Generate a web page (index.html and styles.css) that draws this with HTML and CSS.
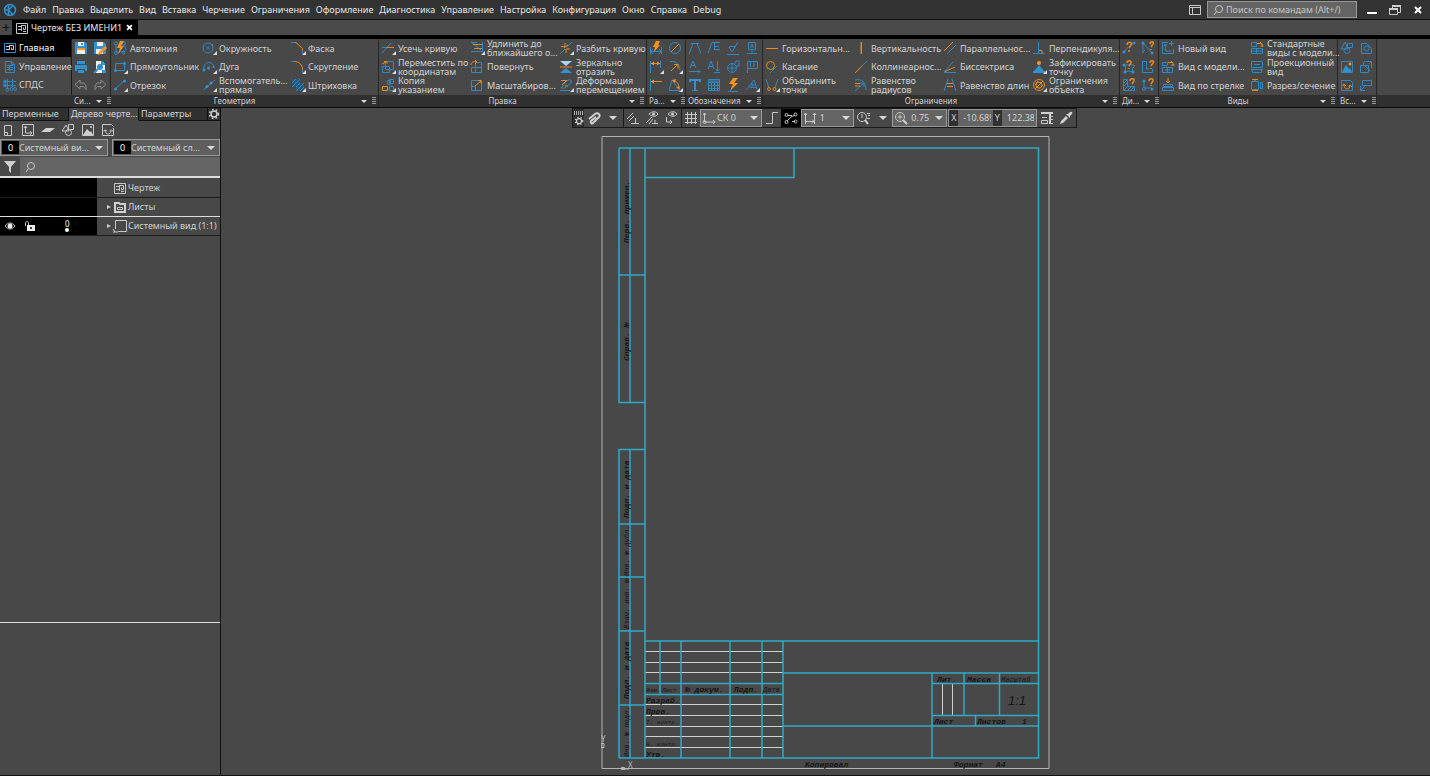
FILE: index.html
```
<!DOCTYPE html>
<html lang="ru">

<head>
    <meta charset="utf-8">
    <link rel="stylesheet" href="styles.css">
    <title>Чертеж БЕЗ ИМЕНИ1</title>
</head>

<body>
    <!-- icon set, every symbol is drawn on a 16x16 grid -->
    <svg class="sprite">
        <symbol id="logo" viewBox="0 0 16 16"><circle class="b2" cx="8" cy="8" r="5.500"/><path class="b2" d="M6.500 3v10M6.500 8l4-4M6.500 8l4 4M2 8h4"/></symbol>
        <symbol id="sheet" viewBox="0 0 16 16"><path class="s" d="M2.500 3.500h11v10h-11zM4 6.500h3.500v3H4M7.500 5v6M7.500 5.500h4v4h-2v-2M9 11.500h3"/></symbol>
        <symbol id="sheetb" viewBox="0 0 16 16"><path class="b" d="M2.500 3.500h11v9h-11z"/><path class="w" d="M4 6.500h3.500v3H4M7.500 5v5M7.500 5.500h4v4h-2v-2"/></symbol>
        <symbol id="manage" viewBox="0 0 16 16"><path class="b" d="M3.500 2.500h6l3 3v8h-9zM9.500 2.500v3h3M5 6.500h6M5 8.500h6M5 10.500h6M7.500 6v6"/></symbol>
        <symbol id="spds" viewBox="0 0 16 16"><path class="b" d="M5.500 2v10M10.500 2v8M2 4.500h12M2 8.500h12"/><circle class="b" cx="3" cy="4.500" r="1.500"/><circle class="b" cx="3" cy="8.500" r="1.500"/><circle class="b" cx="5.500" cy="12.500" r="1.500"/><circle class="b" cx="9.500" cy="12" r="1.500"/><circle class="b" cx="13" cy="12" r="1.500"/></symbol>
        <symbol id="save" viewBox="0 0 16 16"><path class="bf" d="M2 2h10l2 2v10H2z"/><path class="wf" d="M5 2h6v4H5zM4 8h8v6H4z"/><path class="of" d="M4 8h8v2H4z"/><path class="bf" d="M8 3h2v2H8z"/></symbol>
        <symbol id="saveas" viewBox="0 0 16 16"><path class="bf" d="M2 2h10l2 2v10H2z"/><path class="wf" d="M5 2h6v4H5zM4 9h7v5H4z"/><path class="of" d="M13 6l2 2-6 6-3 1 1-3z"/></symbol>
        <symbol id="print" viewBox="0 0 16 16"><path class="bf" d="M4 2h8v3H4zM2 6h12v6h-2v-2H4v2H2zM5 11h6v3H5z"/></symbol>
        <symbol id="preview" viewBox="0 0 16 16"><path class="wf" d="M4 2h6l3 3v9H4z"/><circle class="bf" cx="8" cy="8" r="3"/><path class="b2" d="M6 10l-4 4M10 2v3h3"/><path class="bf" d="M10 11h4v3h-4z"/></symbol>
        <symbol id="undo" viewBox="0 0 16 16"><path class="g" d="M7 3L2 7.500 7 12V9.500h3.500l2.500 3V9l-2-3H7z"/></symbol>
        <symbol id="redo" viewBox="0 0 16 16"><path class="g" d="M9 3l5 4.500L9 12V9.500H5.500L3 12.500V9l2-3h4z"/></symbol>
        <symbol id="autoline" viewBox="0 0 16 16"><path class="b" d="M4 12V4M12 12c3-2 2-6-1-7M4 12c3 2 5-2 8 0"/><circle class="b" cx="4" cy="3.500" r="1.500"/><circle class="b" cx="12" cy="3.500" r="1.500"/><circle class="b" cx="4" cy="13" r="1.500"/><circle class="b" cx="11.500" cy="12.500" r="1.500"/><path class="of" d="M8 1h4L9 6h3l-6 8 2-6H5z"/></symbol>
        <symbol id="rect" viewBox="0 0 16 16"><path class="b" d="M3.500 4.500h9v7h-9z"/><circle class="bf" cx="3.500" cy="11.500" r="1.500"/><circle class="bf" cx="12.500" cy="4.500" r="1.500"/></symbol>
        <symbol id="segment" viewBox="0 0 16 16"><path class="b" d="M3 12l9-8"/><circle class="bf" cx="3.500" cy="12" r="1.500"/><circle class="bf" cx="12.500" cy="4" r="1.500"/></symbol>
        <symbol id="circle" viewBox="0 0 16 16"><circle class="b" cx="7" cy="8" r="5"/><circle class="b" cx="7" cy="8" r="1"/><circle class="bf" cx="11" cy="5" r="1"/></symbol>
        <symbol id="arc" viewBox="0 0 16 16"><path class="b" d="M3 11c-2-9 10-10 10-2"/><circle class="bf" cx="3" cy="11" r="1.500"/><circle class="bf" cx="7.500" cy="9" r="1.500"/><circle class="bf" cx="12.500" cy="8" r="1"/></symbol>
        <symbol id="aux" viewBox="0 0 16 16"><path class="b" d="M2 13L14 3"/><circle class="bf" cx="6" cy="9.500" r="1.500"/><circle class="bf" cx="10" cy="6" r="1.500"/></symbol>
        <symbol id="chamfer" viewBox="0 0 16 16"><path class="b" d="M1 2.500h5M12.500 9v5"/><path class="o" d="M5 2.500h1l6.500 6v2"/></symbol>
        <symbol id="fillet" viewBox="0 0 16 16"><path class="b" d="M1 2.500h4M12.500 10v4"/><path class="o" d="M4 2.500c5 0 8.500 3 8.500 8"/></symbol>
        <symbol id="hatch" viewBox="0 0 16 16"><path class="bf d" d="M2 2h8v4h4v8H6v-4H2z"/><path class="b" d="M2 6l4-4M2 10l8-8M6 10l4-4M6 14l8-8M10 14l4-4"/></symbol>
        <symbol id="trim" viewBox="0 0 16 16"><path class="b" d="M2 13L11 3M2 7.500h6"/><path class="o" d="M7 7.500h7"/></symbol>
        <symbol id="move" viewBox="0 0 16 16"><path class="b" d="M5.500 2.500h8v8h-8zM2.500 7.500h7v6h-7z"/><path class="o" d="M2 5l4-2M4 2.500h3v2"/></symbol>
        <symbol id="copy" viewBox="0 0 16 16"><path class="b" d="M7.500 3.500h3v4h-3zM9.500 2.500h4v4h-4zM9.500 9.500h4v4h-4z"/><path class="o" d="M2.500 9.500h5v4h-5z"/></symbol>
        <symbol id="extend" viewBox="0 0 16 16"><path class="b" d="M2 2.500h6M2 11.500h11M13.500 2v10M2 2l10 8"/><path class="o" d="M4 4.500h9M5 8.500h8"/></symbol>
        <symbol id="rotate" viewBox="0 0 16 16"><path class="b" d="M6.500 3.500h6v10h-6zM2.500 8.500h10v5h-10z"/><path class="o" d="M2 6c0-3 3-4 6-3M6 1l2 2-2 2"/></symbol>
        <symbol id="scale" viewBox="0 0 16 16"><path class="b" d="M2.500 3.500h10v10h-10zM2.500 9.500h4v4"/><path class="o" d="M6 9l6-5M9 3.500h3v3"/></symbol>
        <symbol id="break" viewBox="0 0 16 16"><path class="b" d="M2 14L7 9M9 7l5-5"/><path class="o" d="M3 6.500h4V3M6 8l4-3M8 13V9h4"/></symbol>
        <symbol id="mirror" viewBox="0 0 16 16"><path class="lf" d="M2 2h12L8 7z"/><path class="bf" d="M8 9l6 5H2z"/><path class="o" d="M2 8h12"/></symbol>
        <symbol id="deform" viewBox="0 0 16 16"><path class="b" d="M2 13.500h10M3 11l7-8h3v3l-6 5z"/><path class="o" d="M3 3.500h6M4 8l5-5M7 9h3"/></symbol>
        <symbol id="adim" viewBox="0 0 16 16"><path class="b" d="M2.500 7v7M13.500 7v7M3 11.500h10M5 9l-2 2.500L5 14M11 9l2 2.500-2 2.500"/><path class="of" d="M8 1h4l-2 4h2l-6 7 1-5H5z"/></symbol>
        <symbol id="diam" viewBox="0 0 16 16"><circle class="b" cx="8" cy="8" r="5.500"/><path class="o" d="M4 12l8-8"/></symbol>
        <symbol id="ldim" viewBox="0 0 16 16"><path class="b" d="M2.500 2v12M12.500 2v7"/><path class="o" d="M3 4.500h9"/><path class="of" d="M3 4.500l3-2v4zM12 4.500l-3-2v4z"/></symbol>
        <symbol id="rad" viewBox="0 0 16 16"><path class="b" d="M3 2.500c7-1 10 4 10 9"/><path class="o" d="M4 12l6-6M7 5.500h4v4"/></symbol>
        <symbol id="base" viewBox="0 0 16 16"><path class="b" d="M2.500 2v12"/><path class="o" d="M3 4.500h11"/><path class="of" d="M3 4.500l3-2v4z"/></symbol>
        <symbol id="angle" viewBox="0 0 16 16"><path class="b" d="M2 13.500h11L5 3 2 13"/><path class="o" d="M6 4c4 0 6 3 6 7"/><path class="of" d="M5 3l4-1-1 4zM13 12l-4-1 3-2z"/></symbol>
        <symbol id="leadA" viewBox="0 0 16 16"><path class="b" d="M2 14L6 3.500h4l4 10M4 3.500h8"/></symbol>
        <symbol id="leadE" viewBox="0 0 16 16"><path class="b" d="M2 13L6 2.500h8M8.500 3v7M8 6.500h5M8 9.500h6"/></symbol>
        <symbol id="rough" viewBox="0 0 16 16"><path class="b" d="M2 14.500h12M4 7l3 5 6-10M4 6.500h6"/></symbol>
        <symbol id="datum" viewBox="0 0 16 16"><path class="b" d="M4.500 2.500h7v7h-7zM8 10v4M3 13.500h10M8 4L6.500 8M8 4l1.500 4"/></symbol>
        <symbol id="cutA" viewBox="0 0 16 16"><path class="b" d="M3 9L6 2l3 7M4 6.500h4M2 12.500h11M11 10.500l2 2-2 2"/></symbol>
        <symbol id="arrA" viewBox="0 0 16 16"><path class="b" d="M2 10L5 2l3 8M3 7.500h4M11.500 2v10M9.500 10l2 2 2-2M8 13.500h6"/></symbol>
        <symbol id="balloon" viewBox="0 0 16 16"><circle class="b" cx="7" cy="9" r="4.500"/><path class="b" d="M3 9h8M7 5v9M9 6l2-4h3v5h-3"/></symbol>
        <symbol id="flag" viewBox="0 0 16 16"><path class="b" d="M3.500 14V2.500h10v7h-10M6.500 3v5M10 3v5"/></symbol>
        <symbol id="textT" viewBox="0 0 16 16"><path class="b2" d="M3 5V3h10v2M8 3v10"/><path class="b" d="M5 13.500h6"/></symbol>
        <symbol id="table" viewBox="0 0 16 16"><path class="b" d="M2.500 2.500h11v11h-11zM2 5.500h12M2 8.500h12M2 11.500h12M5.500 5v9M8.500 5v9M11.500 5v9M3 4h10"/></symbol>
        <symbol id="bolt" viewBox="0 0 16 16"><path class="of" d="M8 1h5L9 6h4l-8 8 3-7H4z"/><path class="b" d="M3 14.500h10"/></symbol>
        <symbol id="mark" viewBox="0 0 16 16"><path class="b" d="M2 13L10 3l3 9M5 10l8 1M8 6v5M8 8h3"/></symbol>
        <symbol id="hor" viewBox="0 0 16 16"><path class="o" d="M2 8.500h12"/></symbol>
        <symbol id="ver" viewBox="0 0 16 16"><path class="o" d="M8.500 2v12M8 2v12"/></symbol>
        <symbol id="par" viewBox="0 0 16 16"><path class="o" d="M2 11l9-9"/><path class="b" d="M5 14l9-9"/></symbol>
        <symbol id="perp" viewBox="0 0 16 16"><path class="b" d="M2 13.500h12M7.500 2v11"/><path class="o" d="M8 10.500h3V13"/></symbol>
        <symbol id="tan" viewBox="0 0 16 16"><circle class="o" cx="6.500" cy="6.500" r="4"/><path class="b" d="M6 14l7-7"/></symbol>
        <symbol id="col" viewBox="0 0 16 16"><path class="o" d="M2 14l7-7"/><path class="b" d="M9 7l5-5"/></symbol>
        <symbol id="bis" viewBox="0 0 16 16"><path class="b" d="M2 13L11 3M2 13.500h12"/><path class="o" d="M3 12.500L13 8"/></symbol>
        <symbol id="fix" viewBox="0 0 16 16"><path class="bf" d="M8 6l5 6h1v2H2v-2h1z"/><circle class="of" cx="8" cy="4" r="2"/></symbol>
        <symbol id="join" viewBox="0 0 16 16"><path class="b" d="M2 2l3 9M14 2l-3 9"/><circle class="o" cx="5" cy="12" r="1.500"/><circle class="o" cx="10.500" cy="12" r="1.500"/></symbol>
        <symbol id="eqr" viewBox="0 0 16 16"><path class="b" d="M2 3c7-2 11 3 11 10M2 14l9-8M7 6h4v4"/><path class="o" d="M2 6.500h5M2 9h5"/></symbol>
        <symbol id="eql" viewBox="0 0 16 16"><path class="b" d="M2 14L6 2M10 2l4 12"/><path class="o" d="M5 6.500h6M5 9.500h6"/></symbol>
        <symbol id="limit" viewBox="0 0 16 16"><circle class="o" cx="8" cy="8" r="5.500"/><circle class="o" cx="8" cy="8" r="3"/><path class="o" d="M4 12l8-8M7 4L4 8M12 8l-4 4"/></symbol>
        <symbol id="q1" viewBox="0 0 16 16"><path class="b" d="M3 12l4-5M9 5l3-2"/><circle class="bf" cx="3" cy="12" r="1.500"/><circle class="bf" cx="13" cy="3" r="1.500"/><path class="o2" d="M6 5c0-4 6-3 4 0L8 8M8 10v2"/></symbol>
        <symbol id="q2" viewBox="0 0 16 16"><path class="b" d="M3 3v10M4 4l7 8M2 13l3-3"/><circle class="bf" cx="3" cy="3" r="1.500"/><circle class="bf" cx="12" cy="13" r="1.500"/><path class="o2" d="M10 4c0-3 5-3 3 0l-2 3M11 9v1"/></symbol>
        <symbol id="q3" viewBox="0 0 16 16"><path class="b" d="M3 6h10v2l-2 2 1 3-4-1-4 1 1-4z"/><circle class="bf" cx="3" cy="6" r="1.500"/><circle class="bf" cx="4" cy="13" r="1.500"/><circle class="bf" cx="12" cy="13" r="1.500"/><path class="o2" d="M6 4c0-3 5-3 4 0L8 7M8 9v1"/></symbol>
        <symbol id="q4" viewBox="0 0 16 16"><path class="b" d="M7 2.500H2.500v11h10V10M6.500 3v7h3"/><path class="o2" d="M10 4c0-3 5-3 3 0l-2 3M11 9v1"/></symbol>
        <symbol id="q5" viewBox="0 0 16 16"><path class="b" d="M2.500 2.500h4v7h7v4h-11zM3 6l3-3M3 9l3-3M3 13l4-4M7 13l3-3M10 13l3-3"/><path class="o2" d="M9 4c0-3 5-3 4 0l-2 3"/></symbol>
        <symbol id="q6" viewBox="0 0 16 16"><path class="b" d="M4 3v8h8"/><circle class="bf" cx="4" cy="4" r="1.500"/><circle class="b" cx="4" cy="12" r="1.500"/><circle class="bf" cx="12" cy="12" r="1.500"/><path class="o2" d="M9 4c0-3 5-3 4 0l-2 3M11 8v1"/></symbol>
        <symbol id="newview" viewBox="0 0 16 16"><path class="b" d="M8 2.500H2.500v11h11V9M5.500 5v6h6M4 6l1.500-2L7 6M11.500 1v5M9 3.500h5"/></symbol>
        <symbol id="modelview" viewBox="0 0 16 16"><path class="b" d="M2.500 3.500h5v3h-5zM2.500 8.500h10v5h-10zM5 11h5M7.500 9v4"/><path class="o" d="M8 3.500h5V7M11 2l2 2M11.500 6h3"/></symbol>
        <symbol id="arrowview" viewBox="0 0 16 16"><path class="b" d="M3.500 7.500h9v2h-9zM2.500 10.500h11v3h-11z"/><path class="o" d="M8 1v5M6 4l2 2 2-2"/></symbol>
        <symbol id="stdview" viewBox="0 0 16 16"><path class="b" d="M2.500 2.500h5v4h-5zM2.500 8.500h11v5h-11zM2.500 11h11M7.500 8v6"/><path class="o" d="M8 3.500h5V7M11 2l2 2M11.500 6h3"/></symbol>
        <symbol id="projview" viewBox="0 0 16 16"><path class="b" d="M2.500 2.500h11v6h-11zM5 5.500h6M2 10.500h12M3.500 10.500v3h9v-3"/></symbol>
        <symbol id="section" viewBox="0 0 16 16"><path class="b" d="M2.500 4.500h7v8h-7zM11.500 5.500h2v6h-2z"/><path class="o" d="M6 2v2M6 12v2M3 2.500h6M3 13.500h6"/></symbol>
        <symbol id="frag" viewBox="0 0 16 16"><path class="b" d="M2 9l4-7 3 7zM8.500 3.500h5v4h-5z"/><circle class="b" cx="8" cy="10.500" r="3"/></symbol>
        <symbol id="detail" viewBox="0 0 16 16"><path class="b" d="M3.500 13.500V3.500h5l5 5v5z"/><circle class="b" cx="8.500" cy="8.500" r="2.500"/></symbol>
        <symbol id="picture" viewBox="0 0 16 16"><path class="b" d="M2.500 2.500h11v11h-11z"/><path class="bf" d="M3 13l4-7 3 4 1-1 2 4z"/><circle class="of" cx="11" cy="5" r="1.500"/></symbol>
        <symbol id="crop" viewBox="0 0 16 16"><path class="b" d="M2.500 6.500h8v7h-8zM5.500 6V4l2-2M8 2.500h5.500V9M11 5l2-2M6 6l6 6"/></symbol>
        <symbol id="refresh" viewBox="0 0 16 16"><path class="b" d="M2.500 3.500h9l2 2v8h-11z"/><path class="o" d="M5 8c0 5 6 5 6 1M3.500 9l1.500-2 2 2M9.500 10l1.500-2 2 2"/></symbol>
        <symbol id="callout" viewBox="0 0 16 16"><path class="b" d="M4.500 3.500h9v5h-9zM2 14l5-5M2 13.500h5M2.500 14V9"/></symbol>
        <!-- grey icons of the side panel and of the canvas toolbar -->
        <symbol id="page" viewBox="0 0 16 16"><path class="s" d="M4.500 3.500h7v10h-7zM4.500 10.500h3v3"/></symbol>
        <symbol id="axes" viewBox="0 0 16 16"><path class="s" d="M2.500 2.500h11v11h-11zM5.500 4v7H12M4 6l1.500-2L7 6M10 9.500l2 1.500-2 1.500"/></symbol>
        <symbol id="layer" viewBox="0 0 16 16"><path class="sf" d="M6 6h9l-5 4H1z"/></symbol>
        <symbol id="shapes" viewBox="0 0 16 16"><path class="s" d="M2 9l4-6 3 6zM8.500 2.500h5v5h-5z"/><circle class="s" cx="8.500" cy="10.500" r="3"/></symbol>
        <symbol id="image" viewBox="0 0 16 16"><path class="s" d="M2.500 2.500h11v11h-11z"/><path class="sf" d="M3 13l4-6 3 3 1-1 2 4z"/><circle class="sf" cx="11" cy="5" r="1"/></symbol>
        <symbol id="sync" viewBox="0 0 16 16"><path class="s" d="M2.500 2.500h9l2 2M2.500 2.500v11h11V6M5 8c0 5 6 5 6 1M3.500 9l1.500-1 2 1M9.500 9l1.500-1 2 1"/></symbol>
        <symbol id="gear" viewBox="0 0 16 16"><circle class="s2" cx="8" cy="8" r="4"/><circle class="dots" cx="8" cy="8" r="6"/></symbol>
        <symbol id="funnel" viewBox="0 0 16 16"><path class="sf" d="M2 2h12L9 8v6l-2-2V8z"/></symbol>
        <symbol id="lens" viewBox="0 0 16 16"><circle class="s" cx="9" cy="7" r="3.500"/><path class="s" d="M6 10l-2 3"/></symbol>
        <symbol id="folder" viewBox="0 0 16 16"><path class="s2" d="M3 4h4l1 1h5v8H3z"/><path class="s" d="M5.500 8.500h5v2h-5z"/></symbol>
        <symbol id="viewbox" viewBox="0 0 16 16"><path class="s" d="M3.500 11V2.500h11v11H6M1 11l2 3M1 14h5"/></symbol>
        <symbol id="eye" viewBox="0 0 16 16"><path class="s" d="M3 8c3-4 7-4 10 0-3 4-7 4-10 0z"/><circle class="wf" cx="8" cy="8" r="2.500"/></symbol>
        <symbol id="lock" viewBox="0 0 16 16"><path class="s" d="M3.500 8V5c0-2 3-2 3 0v2"/><path class="wf" d="M5 7h8v6H5z"/><circle cx="9" cy="10" r="1"/></symbol>
        <symbol id="clip" viewBox="0 0 16 16"><path class="s2" d="M3 9l6-5c3-2 6 1 4 3l-6 6c-1 1-3 0-2-2l5-4"/></symbol>
        <symbol id="snap1" viewBox="0 0 16 16"><path class="s" d="M2 9l6-6M4 11l5-5M6 13.500h8M10.500 8v5"/></symbol>
        <symbol id="snap2" viewBox="0 0 16 16"><path class="s" d="M5 4c3-3 7-3 9 0-2 3-6 3-9 0zM2 13l6-6M5 14l4-5M8 13.500h6M11 10v3"/><circle class="sf" cx="9.500" cy="4" r="1.500"/></symbol>
        <symbol id="snap3" viewBox="0 0 16 16"><path class="s" d="M5 4c3-3 7-3 9 0-2 3-6 3-9 0zM3.500 7v5H9M7 10l2 2-2 2"/><circle class="sf" cx="9.500" cy="4" r="1.500"/></symbol>
        <symbol id="grid" viewBox="0 0 16 16"><path class="s" d="M2 4.500h12M2 8.500h12M2 12.500h12M4.500 2v12M8.500 2v12M12.500 2v12"/></symbol>
        <symbol id="cs" viewBox="0 0 16 16"><path class="s" d="M3.500 3v9H14M2 5l1.500-2L5 5M12 10l2 2-2 2"/><circle class="s" cx="3.500" cy="12" r="1.500"/></symbol>
        <symbol id="ortho" viewBox="0 0 16 16"><path class="s" d="M2 13.500h6.500v-11H14"/></symbol>
        <symbol id="round" viewBox="0 0 16 16"><path class="s" d="M4 11l4-4 4-2M5 5.500h4M9 11.500h3"/><circle class="s" cx="3.500" cy="5" r="1.500"/><circle class="s" cx="12.500" cy="4.500" r="1.500"/><circle class="s" cx="3.500" cy="12" r="1.500"/><circle class="s" cx="12.500" cy="11.500" r="1.500"/></symbol>
        <symbol id="step" viewBox="0 0 16 16"><path class="s" d="M3.500 3v11M12.500 3v11M4 11.500h8M2 5l1.500-2L5 5M11 5l1.500-2L14 5M10 9.500l2 2-2 2"/></symbol>
        <symbol id="zoomsel" viewBox="0 0 16 16"><circle class="s" cx="7" cy="7" r="4.500"/><path class="s2" d="M10 10l3 4"/><path class="s" d="M12 3.500h3M13 5.500h2M12 8.500h3M7 4v4"/></symbol>
        <symbol id="zoomin" viewBox="0 0 16 16"><circle class="s" cx="7" cy="7" r="4.500"/><path class="s" d="M7 4.500v5M4.500 7h5"/><path class="s2" d="M10 10l4 4"/></symbol>
        <symbol id="ruler" viewBox="0 0 16 16"><path class="s2" d="M2 3h12M11 3v11"/><path class="s" d="M12 6.500h2M12 9.500h2M12 13.500h2M3 7.500h5M2.500 10.500h6v3h-6z"/></symbol>
        <symbol id="dropper" viewBox="0 0 16 16"><path class="sf" d="M10 4l2-2c2-1 3 1 2 2l-2 2v2L8 4zM8 6l2 2-5 5-3 1 1-3z"/></symbol>
        <symbol id="panel" viewBox="0 0 16 16"><path class="s" d="M2.500 3.500h11v9h-11zM2 5.500h12M5.500 6v7"/></symbol>
        <symbol id="min" viewBox="0 0 16 16"><path class="x" d="M3 11h10"/></symbol>
        <symbol id="restore" viewBox="0 0 16 16"><path class="s" d="M2.500 6.500h8v6h-8zM5.500 6V4.500h8v6H11"/><path class="s2" d="M2 7h9M5 4h9"/></symbol>
        <symbol id="close" viewBox="0 0 16 16"><path class="x" d="M5 5l6 6M11 5l-6 6"/></symbol>
    </svg>

    <header class="menubar">
        <svg class="ic"><use href="#logo"/></svg>
        <nav class="menu">
            <button>Файл</button><button>Правка</button><button>Выделить</button><button>Вид</button><button>Вставка</button><button>Черчение</button><button>Ограничения</button><button>Оформление</button><button>Диагностика</button><button>Управление</button><button>Настройка</button><button>Конфигурация</button><button>Окно</button><button>Справка</button><button>Debug</button>
        </nav>
        <div class="window">
            <button aria-label="Панели"><svg class="ic"><use href="#panel"/></svg></button>
            <label class="search"><svg class="ic"><use href="#lens"/></svg><input type="text" aria-label="Поиск по командам" placeholder="Поиск по командам (Alt+/)"></label>
            <button aria-label="Свернуть"><svg class="ic"><use href="#min"/></svg></button>
            <button aria-label="Восстановить"><svg class="ic"><use href="#restore"/></svg></button>
            <button aria-label="Закрыть"><svg class="ic"><use href="#close"/></svg></button>
        </div>
    </header>

    <div class="docs">
        <button class="add" aria-label="Новый документ">+</button>
        <div class="doc">
            <svg class="ic"><use href="#sheet"/></svg><span>Чертеж БЕЗ ИМЕНИ1</span>
            <button aria-label="Закрыть документ"><svg class="ic"><use href="#close"/></svg></button>
        </div>
    </div>

    <div class="ribbon">
        <div class="tabs">
            <button class="active"><svg class="ic"><use href="#sheetb"/></svg>Главная</button>
            <button><svg class="ic"><use href="#manage"/></svg>Управление</button>
            <button><svg class="ic"><use href="#spds"/></svg>СПДС</button>
        </div>

        <section class="group">
            <div class="tools small two">
                <button><svg class="ic"><use href="#save"/></svg></button>
                <button><svg class="ic"><use href="#saveas"/></svg></button>
                <button><svg class="ic"><use href="#print"/></svg></button>
                <button><svg class="ic"><use href="#preview"/></svg></button>
                <button><svg class="ic"><use href="#undo"/></svg></button>
                <button><svg class="ic"><use href="#redo"/></svg></button>
            </div>
            <footer><span>Си...</span><i class="down"></i><i class="grip"></i></footer>
        </section>

        <section class="group">
            <div class="tools three">
                <button><svg class="ic"><use href="#autoline"/></svg><span>Автолиния</span></button>
                <button class="more"><svg class="ic"><use href="#circle"/></svg><span>Окружность</span></button>
                <button class="more"><svg class="ic"><use href="#chamfer"/></svg><span>Фаска</span></button>
                <button class="more"><svg class="ic"><use href="#rect"/></svg><span>Прямоугольник</span></button>
                <button class="more"><svg class="ic"><use href="#arc"/></svg><span>Дуга</span></button>
                <button class="more"><svg class="ic"><use href="#fillet"/></svg><span>Скругление</span></button>
                <button class="more"><svg class="ic"><use href="#segment"/></svg><span>Отрезок</span></button>
                <button class="more"><svg class="ic"><use href="#aux"/></svg><span>Вспомогатель...<br>прямая</span></button>
                <button class="more"><svg class="ic"><use href="#hatch"/></svg><span>Штриховка</span></button>
            </div>
            <footer><span>Геометрия</span><i class="down"></i><i class="grip"></i></footer>
        </section>

        <section class="group">
            <div class="tools three">
                <button class="more"><svg class="ic"><use href="#trim"/></svg><span>Усечь кривую</span></button>
                <button class="more"><svg class="ic"><use href="#extend"/></svg><span>Удлинить до<br>ближайшего о...</span></button>
                <button class="more"><svg class="ic"><use href="#break"/></svg><span>Разбить кривую</span></button>
                <button class="more"><svg class="ic"><use href="#move"/></svg><span>Переместить по<br>координатам</span></button>
                <button><svg class="ic"><use href="#rotate"/></svg><span>Повернуть</span></button>
                <button><svg class="ic"><use href="#mirror"/></svg><span>Зеркально<br>отразить</span></button>
                <button class="more"><svg class="ic"><use href="#copy"/></svg><span>Копия<br>указанием</span></button>
                <button><svg class="ic"><use href="#scale"/></svg><span>Масштабиров...</span></button>
                <button class="more"><svg class="ic"><use href="#deform"/></svg><span>Деформация<br>перемещением</span></button>
            </div>
            <footer><span>Правка</span><i class="down"></i><i class="grip"></i></footer>
        </section>

        <section class="group">
            <div class="tools small two">
                <button><svg class="ic"><use href="#adim"/></svg></button>
                <button><svg class="ic"><use href="#diam"/></svg></button>
                <button class="more"><svg class="ic"><use href="#ldim"/></svg></button>
                <button class="more"><svg class="ic"><use href="#rad"/></svg></button>
                <button><svg class="ic"><use href="#base"/></svg></button>
                <button class="more"><svg class="ic"><use href="#angle"/></svg></button>
            </div>
            <footer><span>Ра...</span><i class="down"></i><i class="grip"></i></footer>
        </section>

        <section class="group">
            <div class="tools small four">
                <button><svg class="ic"><use href="#leadA"/></svg></button>
                <button><svg class="ic"><use href="#leadE"/></svg></button>
                <button><svg class="ic"><use href="#rough"/></svg></button>
                <button><svg class="ic"><use href="#datum"/></svg></button>
                <button><svg class="ic"><use href="#cutA"/></svg></button>
                <button><svg class="ic"><use href="#arrA"/></svg></button>
                <button><svg class="ic"><use href="#balloon"/></svg></button>
                <button><svg class="ic"><use href="#flag"/></svg></button>
                <button><svg class="ic"><use href="#textT"/></svg></button>
                <button><svg class="ic"><use href="#table"/></svg></button>
                <button><svg class="ic"><use href="#bolt"/></svg></button>
                <button class="more"><svg class="ic"><use href="#mark"/></svg></button>
            </div>
            <footer><span>Обозначения</span><i class="down"></i><i class="grip"></i></footer>
        </section>

        <section class="group">
            <div class="tools wide">
                <button><svg class="ic"><use href="#hor"/></svg><span>Горизонтальн...</span></button>
                <button><svg class="ic"><use href="#ver"/></svg><span>Вертикальность</span></button>
                <button><svg class="ic"><use href="#par"/></svg><span>Параллельнос...</span></button>
                <button><svg class="ic"><use href="#perp"/></svg><span>Перпендикуля...</span></button>
                <button><svg class="ic"><use href="#tan"/></svg><span>Касание</span></button>
                <button><svg class="ic"><use href="#col"/></svg><span>Коллинеарнос...</span></button>
                <button><svg class="ic"><use href="#bis"/></svg><span>Биссектриса</span></button>
                <button class="more"><svg class="ic"><use href="#fix"/></svg><span>Зафиксировать<br>точку</span></button>
                <button class="more"><svg class="ic"><use href="#join"/></svg><span>Объединить<br>точки</span></button>
                <button><svg class="ic"><use href="#eqr"/></svg><span>Равенство<br>радиусов</span></button>
                <button><svg class="ic"><use href="#eql"/></svg><span>Равенство длин</span></button>
                <button class="more"><svg class="ic"><use href="#limit"/></svg><span>Ограничения<br>объекта</span></button>
            </div>
            <footer><span>Ограничения</span><i class="down"></i><i class="grip"></i></footer>
        </section>

        <section class="group">
            <div class="tools small two">
                <button><svg class="ic"><use href="#q1"/></svg></button>
                <button><svg class="ic"><use href="#q2"/></svg></button>
                <button><svg class="ic"><use href="#q3"/></svg></button>
                <button><svg class="ic"><use href="#q4"/></svg></button>
                <button><svg class="ic"><use href="#q5"/></svg></button>
                <button><svg class="ic"><use href="#q6"/></svg></button>
            </div>
            <footer><span>Ди...</span><i class="down"></i><i class="grip"></i></footer>
        </section>

        <section class="group">
            <div class="tools pair">
                <button><svg class="ic"><use href="#newview"/></svg><span>Новый вид</span></button>
                <button><svg class="ic"><use href="#stdview"/></svg><span>Стандартные<br>виды с модели...</span></button>
                <button><svg class="ic"><use href="#modelview"/></svg><span>Вид с модели...</span></button>
                <button><svg class="ic"><use href="#projview"/></svg><span>Проекционный<br>вид</span></button>
                <button><svg class="ic"><use href="#arrowview"/></svg><span>Вид по стрелке</span></button>
                <button><svg class="ic"><use href="#section"/></svg><span>Разрез/сечение</span></button>
            </div>
            <footer><span>Виды</span><i class="down"></i><i class="grip"></i></footer>
        </section>

        <section class="group">
            <div class="tools small two">
                <button><svg class="ic"><use href="#frag"/></svg></button>
                <button><svg class="ic"><use href="#detail"/></svg></button>
                <button><svg class="ic"><use href="#picture"/></svg></button>
                <button><svg class="ic"><use href="#crop"/></svg></button>
                <button><svg class="ic"><use href="#refresh"/></svg></button>
                <button><svg class="ic"><use href="#callout"/></svg></button>
            </div>
            <footer><span>Вс...</span><i class="down"></i><i class="grip"></i></footer>
        </section>
    </div>

    <div class="main">
        <aside>
            <div class="paneltabs">
                <button>Переменные</button>
                <button class="active">Дерево черте...</button>
                <button>Параметры</button>
                <button class="cog" aria-label="Настройка"><svg class="ic"><use href="#gear"/></svg></button>
            </div>
            <div class="paneltools">
                <button><svg class="ic"><use href="#page"/></svg></button>
                <button><svg class="ic"><use href="#axes"/></svg></button>
                <button><svg class="ic"><use href="#layer"/></svg></button>
                <button><svg class="ic"><use href="#shapes"/></svg></button>
                <button><svg class="ic"><use href="#image"/></svg></button>
                <button><svg class="ic"><use href="#sync"/></svg></button>
            </div>
            <div class="combos">
                <label class="combo"><b>0</b><select aria-label="Вид"><option>Системный ви...</option></select><i class="down"></i></label>
                <label class="combo"><b>0</b><select aria-label="Слой"><option>Системный сл...</option></select><i class="down"></i></label>
            </div>
            <div class="filter">
                <button aria-label="Фильтр"><svg class="ic"><use href="#funnel"/></svg></button>
                <label><svg class="ic"><use href="#lens"/></svg><input type="text" aria-label="Поиск в дереве"></label>
            </div>
            <div class="tree">
                <div class="row">
                    <div class="state"></div>
                    <div class="node"><i></i><svg class="ic"><use href="#sheet"/></svg>Чертеж</div>
                </div>
                <div class="row">
                    <div class="state"></div>
                    <div class="node"><i class="right"></i><svg class="ic"><use href="#folder"/></svg>Листы</div>
                </div>
                <div class="row current">
                    <div class="state"><svg class="ic"><use href="#eye"/></svg><svg class="ic"><use href="#lock"/></svg><span class="level">0</span></div>
                    <div class="node"><i class="right"></i><svg class="ic"><use href="#viewbox"/></svg>Системный вид (1:1)</div>
                </div>
            </div>
            <div class="details"></div>
        </aside>

        <main>
            <div class="bar">
                <button class="handle" aria-label="Настройка панели"><i></i><svg><use href="#gear"/></svg></button>
                <button><svg class="ic"><use href="#clip"/></svg></button>
                <button><i class="down"></i></button>
                <button class="sep"><svg class="ic"><use href="#snap1"/></svg></button>
                <button><svg class="ic"><use href="#snap2"/></svg></button>
                <button><svg class="ic"><use href="#snap3"/></svg></button>
                <button class="sep"><svg class="ic"><use href="#grid"/></svg></button>
                <label class="field cs"><svg class="ic"><use href="#cs"/></svg><select aria-label="Система координат"><option>СК 0</option></select><i class="down"></i></label>
                <button><svg class="ic"><use href="#ortho"/></svg></button>
                <button class="on"><svg class="ic"><use href="#round"/></svg></button>
                <label class="field step"><svg class="ic"><use href="#step"/></svg><select aria-label="Шаг курсора"><option>1</option></select><i class="down"></i></label>
                <button><svg class="ic"><use href="#zoomsel"/></svg></button>
                <button><i class="down"></i></button>
                <label class="field scale"><svg class="ic"><use href="#zoomin"/></svg><select aria-label="Масштаб"><option>0.75</option></select><i class="down"></i></label>
                <div class="field xy">
                    <label for="cx">X</label><input type="text" id="cx" value="-10.689">
                    <label for="cy">Y</label><input type="text" id="cy" value="122.382">
                </div>
                <button><svg class="ic"><use href="#ruler"/></svg></button>
                <button><svg class="ic"><use href="#dropper"/></svg></button>
            </div>

            <!-- A4 sheet: paper edge, frame, side columns, title block -->
            <svg class="paper" viewBox="601 136 449 634">
                <path class="edge" d="M602 136.500h447v632H602z"/>
                <g class="thin">
                    <path d="M645 651.500h138M645 662.500h138M645 672.500h138M645 704.500h138M645 715.500h138M645 726.500h138M645 736.500h138M645 747.500h138"/>
                    <path d="M942.500 684v31M952.500 684v31"/>
                </g>
                <g class="frame">
                    <path d="M619 148h419.500v610H619M645 148v610"/>
                    <path d="M645 177.500h149V148"/>
                    <path d="M619 148v254.500h26M619 275h26M630 148v254"/>
                    <path d="M619 758V449.500h26M630 450v308M619 524h26M619 577h26M619 631h26M619 705h26"/>
                    <path d="M645 641h393M660 641v53M681 641v117M730 641v117M762 641v117M783 641v117"/>
                    <path d="M645 683.500h138M645 694.500h138"/>
                    <path d="M783 673h255M783 726h255M932 673v85M932 683.500h106M964 673v43M999.500 673v43M932 715.500h106M975.500 716v10"/>
                </g>
                <g class="note">
                    <text transform="translate(629 243) rotate(-90)">Перв. примен.</text>
                    <text transform="translate(629 361) rotate(-90)">Справ. №</text>
                    <text transform="translate(629 518) rotate(-90)">Подп. и дата</text>
                    <text class="dim" transform="translate(629 576) rotate(-90)">Инв. № дубл.</text>
                    <text class="dim" transform="translate(629 629) rotate(-90)">Взам. инв. №</text>
                    <text transform="translate(629 699) rotate(-90)">Подп. и дата</text>
                    <text class="dim" transform="translate(629 757) rotate(-90)">Инв. № подл.</text>
                    <text class="tiny" x="646" y="692">Изм.</text>
                    <text class="tiny" x="662" y="692">Лист</text>
                    <text x="685" y="692">№ докум.</text>
                    <text x="734" y="692">Подп.</text>
                    <text class="dim" x="763" y="692">Дата</text>
                    <text x="646" y="703">Разраб.</text>
                    <text x="646" y="714">Пров.</text>
                    <text class="tiny" x="646" y="724">Т. контр.</text>
                    <text class="tiny" x="646" y="746">Н. контр.</text>
                    <text x="646" y="757">Утв.</text>
                    <text x="937" y="682">Лит.</text>
                    <text x="967" y="682">Масса</text>
                    <text class="dim" x="1001" y="682">Масштаб</text>
                    <text class="ratio" x="1008" y="705">1:1</text>
                    <text x="934" y="724">Лист</text>
                    <text x="977" y="724">Листов</text>
                    <text x="1022" y="724">1</text>
                    <text x="805" y="767">Копировал</text>
                    <text x="954" y="767">Формат</text>
                    <text x="996" y="767">А4</text>
                </g>
                <g class="origin">
                    <path d="M601 743.500h3v4h-3zM621.500 767.500h3v2h-3zM624 769h5"/>
                    <text x="601" y="742">Y</text>
                    <text x="628" y="768">X</text>
                </g>
            </svg>
        </main>
    </div>
    <div class="status"></div>
</body>

</html>
```
FILE: styles.css
```
* {
    box-sizing: border-box;
}

body {
    margin: 0;
    height: 100vh;
    display: flex;
    flex-direction: column;
    overflow: hidden;
    background: #484848;
    color: #d2d2d2;
    font: 9px/12px "Noto Sans", "Open Sans", sans-serif;
}

button, input, select {
    font: inherit;
    color: inherit;
    background: none;
    border: 0;
    padding: 0;
    margin: 0;
    min-width: 0;
}

button {
    display: flex;
    align-items: center;
    white-space: nowrap;
}

select {
    appearance: none;
    flex: 1;
}

/* icons */
.sprite {
    position: absolute;
    width: 0;
    height: 0;
}

.ic {
    width: 16px;
    height: 16px;
    flex: none;
}

.b, .b2, .o, .o2, .w, .g, .s, .s2, .x, .dots { fill: none; }
.b { stroke: #3189c4; }
.b2 { stroke: #3292cf; stroke-width: 2; }
#logo .b2 { stroke-width: 1.5; }
.o { stroke: #e58a1c; }
.o2 { stroke: #e58a1c; stroke-width: 1.5; }
.w { stroke: #c4d2da; }
.g { stroke: #8c8c8c; }
.s { stroke: #c8c8c8; }
.s2 { stroke: #d0d0d0; stroke-width: 2; }
.x { stroke: #fff; stroke-width: 2; }
.dots { stroke: #d0d0d0; stroke-width: 2; stroke-dasharray: 2 3; }
.bf { fill: #3292cf; }
.bf.d { fill: #28597a; }
.of { fill: #f79420; }
.wf { fill: #eee; }
.lf { fill: #a9d6ef; }
.sf { fill: #d0d0d0; }

.down {
    border: 4px solid transparent;
    border-top: 4px solid #d8d8d8;
    border-bottom: 0;
    flex: none;
}

.grip {
    width: 4px;
    height: 8px;
    background: repeating-linear-gradient(#999 0 1px, transparent 1px 2px);
    flex: none;
}

/* menu line */
.menubar {
    height: 20px;
    flex: none;
    display: flex;
    align-items: center;
    padding: 0 4px 0 2px;
    background: #333;
    border-bottom: 1px solid #111;
    color: #e6e6e6;
}

.menu {
    display: flex;
    gap: 6px;
    margin-left: 5px;
}

.window {
    display: flex;
    align-items: center;
    gap: 7px;
    margin-left: auto;
}

.window > button:first-child {
    margin-right: -3px;
}

.search {
    display: flex;
    align-items: center;
    width: 150px;
    height: 17px;
    border: 1px solid #999;
    background: #646464;
    padding-left: 2px;
}

.search input {
    flex: 1;
}

::placeholder {
    color: #c4c4c4;
    opacity: 1;
}

/* open documents */
.docs {
    display: flex;
    height: 19px;
    flex: none;
    background: #4a4a4a;
    border-bottom: 4px solid #000;
}

.add {
    width: 12px;
    justify-content: center;
    color: #111;
    font-size: 14px;
}

.doc {
    display: flex;
    align-items: center;
    gap: 1px;
    width: 126px;
    padding: 0 3px 0 2px;
    background: #000;
    color: #e6e6e6;
    white-space: nowrap;
}

.doc button {
    margin-left: auto;
}

.doc button .ic {
    width: 13px;
    height: 13px;
}

/* ribbon */
.ribbon {
    display: flex;
    flex: none;
    height: 69px;
    background: linear-gradient(#484848 56px, #303030 56px);
    border-bottom: 1px solid #0c0c0c;
}

.tabs {
    display: grid;
    grid-template-rows: 18px 19px 18px;
    width: 72px;
    height: 56px;
    border-right: 1px solid #1c1c1c;
}

.tabs button {
    padding-left: 2px;
    gap: 1px;
}

.active {
    background: #000;
    color: #fff;
}

.group {
    border-right: 1px solid #262626;
}

.tools {
    display: grid;
    height: 56px;
    grid-template-rows: 18px 19px 18px;
}

.two { grid-template-columns: repeat(2, 19px); }
.four { grid-template-columns: repeat(4, 19px); }
.three { grid-template-columns: repeat(3, 89px); }
.wide { grid-template-columns: repeat(4, 89px); }
.pair { grid-template-columns: repeat(2, 89px); }

.tools button {
    position: relative;
    gap: 2px;
    padding-left: 1px;
    line-height: 9px;
    text-align: left;
}

/* corner mark of a button with variants */
.more::after {
    content: "";
    position: absolute;
    left: 13px;
    bottom: 2px;
    border-left: 4px solid transparent;
    border-bottom: 4px solid #ddd;
}

.group footer {
    display: flex;
    align-items: center;
    width: 0;
    min-width: 100%;
    height: 12px;
    gap: 5px;
    padding: 0 2px;
    font-size: 8px;
}

.group footer span {
    flex: 1;
    text-align: center;
}

.group .down {
    border-width: 3px 3px 0;
}

/* side panel */
.main {
    display: flex;
    flex: 1;
    min-height: 0;
}

aside {
    width: 221px;
    flex: none;
    display: flex;
    flex-direction: column;
    border-right: 1px solid #111;
}

.paneltabs {
    display: flex;
    height: 13px;
    background: #303030;
}

.paneltabs button {
    width: 69px;
    padding-left: 2px;
    border: 1px solid #111;
    border-width: 0 1px 1px 0;
}

.paneltabs .active {
    width: 70px;
    background: #484848;
    color: inherit;
    border-bottom-color: #484848;
}

.paneltabs .cog {
    flex: 1;
    padding: 0;
    border-right: 0;
    justify-content: center;
}

.cog .ic {
    width: 12px;
    height: 12px;
}

.paneltools {
    display: flex;
    height: 18px;
    gap: 4px;
}

.combos {
    display: flex;
    gap: 4px;
    padding-bottom: 1px;
}

.combo {
    display: flex;
    align-items: center;
    flex: 1;
    height: 17px;
    padding: 0 4px 0 1px;
    border: 1px solid #999;
    background: #5e5e5e;
}

.combo b {
    width: 17px;
    line-height: 13px;
    text-align: center;
    background: #000;
    font-weight: normal;
    color: #fff;
}

.filter {
    display: flex;
    height: 21px;
    border-bottom: 2px solid #ddd;
}

.filter button {
    padding: 0 2px;
}

.filter label {
    flex: 1;
    display: flex;
    align-items: center;
    padding-left: 2px;
    background: #646464;
}

.row {
    display: flex;
    height: 19px;
    border-bottom: 1px solid #1c1c1c;
}

.row.current {
    height: 20px;
    margin-top: -1px;
    border-top: 1px solid #ddd;
}

.tree .row:first-child {
    height: 20px;
}

.state {
    width: 97px;
    display: flex;
    align-items: center;
    gap: 4px;
    padding-left: 2px;
    background: #000;
}

.level {
    margin-left: 23px;
    font-size: 8px;
    line-height: 8px;
    text-align: center;
    color: #fff;
}

.level::after {
    content: "";
    display: block;
    width: 4px;
    height: 4px;
    border-radius: 2px;
    background: #fff;
}

.node {
    flex: 1;
    display: flex;
    align-items: center;
    padding-left: 10px;
    white-space: nowrap;
}

.node i {
    width: 5px;
}

.right {
    border: 2px solid transparent;
    border-left: 4px solid #ccc;
    border-right: 0;
}

.details {
    height: 153px;
    margin-top: auto;
    border-top: 1px solid #ddd;
}

/* drawing area */
main {
    flex: 1;
    min-width: 0;
    display: flex;
    flex-direction: column;
    align-items: center;
}

.bar {
    display: flex;
    align-items: center;
    height: 20px;
    width: 505px;
    margin-right: 2px;
    flex: none;
    border: 1px solid #1a1a1a;
    background: #484848;
}

.bar button, .bar .field {
    height: 18px;
}

.bar button {
    flex: 1 1 20px;
    justify-content: center;
}

.bar .handle {
    flex: none;
    width: 11px;
    flex-direction: column;
    background: #303030;
}

.handle i {
    width: 9px;
    height: 4px;
    margin: 1px;
    background: repeating-linear-gradient(90deg, #aaa 0 1px, transparent 1px 2px);
}

.handle svg {
    width: 10px;
    height: 10px;
}

.bar .sep {
    border-left: 1px solid #1a1a1a;
}

.bar .on {
    background: #000;
}

.field {
    display: flex;
    align-items: center;
    flex: none;
    padding-right: 3px;
    border: 1px solid #999;
    background: #646464;
}

.cs { width: 62px; }
.step { width: 53px; }
.scale { width: 55px; }

.step select, .scale select {
    padding-left: 2px;
}

.bar .xy {
    width: 89px;
    padding: 0;
    margin-left: 1px;
}

.xy label {
    width: 9px;
    line-height: 16px;
    text-align: center;
    background: #303030;
}

.xy input {
    flex: 1;
    width: 0;
    margin: 0 2px 0 5px;
}

/* sheet */
.paper {
    width: 449px;
    height: 634px;
    margin-top: 8px;
    flex: none;
}

.paper path {
    fill: none;
}

.edge { stroke: #b4b4b4; }
.thin { stroke: #d0d0d0; }
.frame { stroke: #30a8c8; stroke-width: 1.5; }

.note {
    fill: #161616;
    font: italic bold 8px "Liberation Mono", monospace;
}

.note .dim, .note .tiny {
    font-size: 7px;
    font-weight: normal;
}

.note .tiny {
    font-size: 6px;
}

.note .ratio {
    font: italic 13px "Liberation Sans", sans-serif;
}

.origin { stroke: #bbb; }

.origin text {
    font-size: 8px;
    stroke: none;
    fill: #bbb;
}

.status {
    height: 1px;
    flex: none;
    background: #151015;
}
```
